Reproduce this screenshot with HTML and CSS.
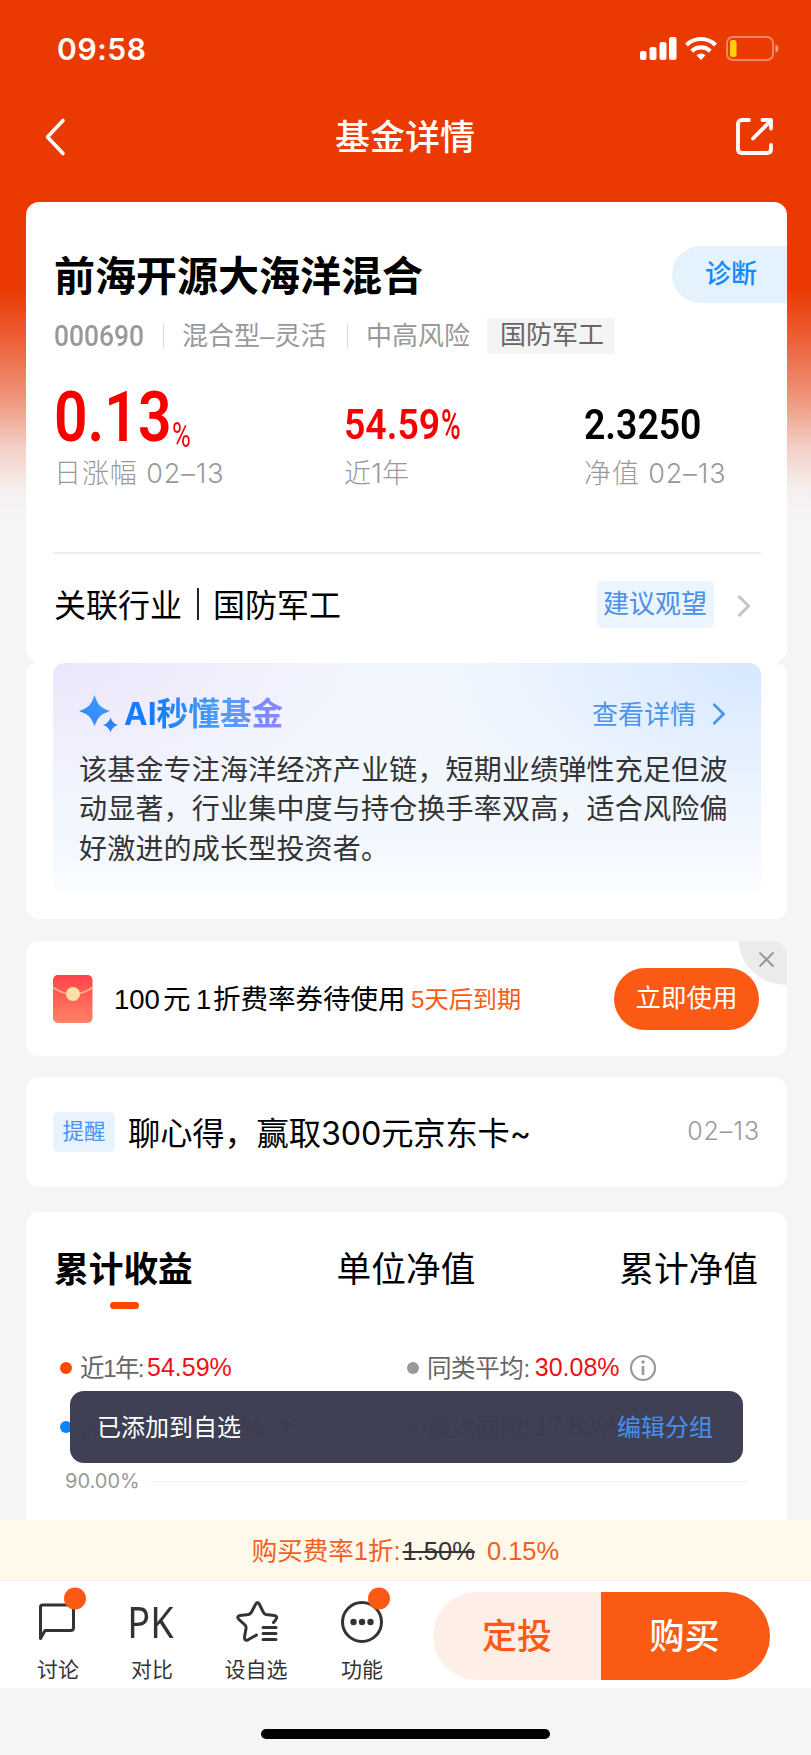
FILE: index.html
```html
<!DOCTYPE html>
<html lang="zh-CN">
<head>
<meta charset="utf-8">
<title>基金详情</title>
<link rel="stylesheet" href="styles.css">
</head>
<body>
<div class="page">
  <header class="status">
    <span class="clock">09:58</span>
    <svg class="status-icons" width="140" height="26" viewBox="0 0 140 26">
      <g fill="#fff">
        <rect x="0" y="15" width="6.500" height="9" rx="2"/>
        <rect x="9.500" y="11" width="7" height="13" rx="2"/>
        <rect x="19.500" y="6" width="7" height="18" rx="2"/>
        <rect x="29" y="1" width="7.500" height="23" rx="2"/>
        <path d="M61 24l-4.500-4.800a6.500 6.500 0 0 1 9 0z"/>
      </g>
      <g fill="none" stroke="#fff" stroke-width="4.200">
        <path d="M51.800 15.200a13.200 13.200 0 0 1 18.400 0"/>
        <path d="M46.500 9a20.500 20.500 0 0 1 29 0"/>
      </g>
      <rect x="87" y="1" width="46" height="23" rx="6" fill="none" stroke="#fff" stroke-opacity=".4" stroke-width="2"/>
      <path d="M135.500 8.500q3 1 3 4t-3 4z" fill="#fff" fill-opacity=".5"/>
      <rect x="90" y="4" width="6.500" height="17" rx="2.500" fill="#fdd10a"/>
    </svg>
  </header>
  <nav class="navbar">
    <svg width="24" height="40" viewBox="0 0 24 40" fill="none" stroke="#fff" stroke-width="3.600" stroke-linecap="round" stroke-linejoin="round"><path d="M19 3.500L3.500 20 19 36.500"/></svg>
    <h1 class="nav-title">基金详情</h1>
    <svg width="40" height="40" viewBox="0 0 40 40" fill="none" stroke="#fff" stroke-width="3.800" stroke-linecap="round" stroke-linejoin="round"><path d="M14 3H7Q3 3 3 7V32Q3 36 7 36H32Q36 36 36 32V28M18 21.500L35 4.500M27.500 3H36V11.500"/></svg>
  </nav>

  <main class="content">
    <section class="card fund">
      <div class="fund-head">
        <h2 class="fund-name">前海开源大海洋混合</h2>
        <span class="diagnose">诊断</span>
      </div>
      <div class="meta">
        <span class="code"><b class="din">000690</b></span><i class="sep"></i>
        <span class="kind">混合型–灵活</span><i class="sep"></i>
        <span class="risk">中高风险</span>
        <span class="tag">国防军工</span>
      </div>
      <div class="figures">
        <div class="figure f1">
          <div class="num up first"><span class="din big">0.13</span><span class="din pct-s">%</span></div>
          <div class="label">日涨幅 02–13</div>
        </div>
        <div class="figure f2">
          <div class="num up"><span class="din mid">54.59</span><span class="din pct-m">%</span></div>
          <div class="label tight">近1年</div>
        </div>
        <div class="figure f3">
          <div class="num"><span class="din nav">2.3250</span></div>
          <div class="label">净值 02–13</div>
        </div>
      </div>
      <div class="industry">
        <span>关联行业</span><i class="bar"></i><span>国防军工</span>
        <span class="advice">建议观望</span>
        <svg class="chev" width="16" height="24" viewBox="0 0 16 24" fill="none" stroke="#c4c4c4" stroke-width="3"><path d="M2.500 2L12.500 12 2.500 22"/></svg>
      </div>
    </section>

    <section class="card ai">
      <div class="ai-panel">
        <div class="ai-head">
          <svg width="40" height="40" viewBox="0 0 40 40">
            <defs><linearGradient id="spark" x1="1" y1="0" x2="0" y2="1"><stop offset="0" stop-color="#3ea2ff"/><stop offset="1" stop-color="#2e80fb"/></linearGradient></defs>
            <path fill="url(#spark)" d="M15.500 1Q17 5.500 18.500 8.500 20.500 12.500 25 14.500 28 16 31 17 28 18 25 19.500 20.500 21.500 18.500 25.500 17 28.500 15.500 32 14 28.500 12.500 25.500 10.500 21.500 6 19.500 3 18 0 17 3 16 6 14.500 10.500 12.500 12.500 8.500 14 5.500 15.500 1Z"/>
            <path fill="#2b84f9" d="M31.500 23.500Q33.300 29.500 39 31 33.300 32.500 31.500 38.500 29.700 32.500 24 31 29.700 29.500 31.500 23.500Z"/>
          </svg>
          <h3 class="ai-title">AI秒懂基金</h3>
          <span class="more">查看详情</span>
          <svg width="16" height="24" viewBox="0 0 16 24" fill="none" stroke="#4a94ec" stroke-width="2.600"><path d="M2.500 2L12.500 12 2.500 22"/></svg>
        </div>
        <p class="ai-text">该基金专注海洋经济产业链，短期业绩弹性充足但波<br>动显著，行业集中度与持仓换手率双高，适合风险偏<br>好激进的成长型投资者。</p>
      </div>
    </section>

    <section class="card coupon">
      <svg width="40" height="50" viewBox="0 0 40 50">
        <defs><linearGradient id="env" x1="0" y1="0" x2="0" y2="1"><stop offset="0" stop-color="#ff434c"/><stop offset="1" stop-color="#ff8265"/></linearGradient></defs>
        <rect x="0" y="1" width="39.500" height="48" rx="5" fill="url(#env)"/>
        <path d="M0 13.500Q20 27 39.500 13.500" fill="none" stroke="#ffb08e" stroke-width="2"/>
        <circle cx="20" cy="20" r="7" fill="#ffdfa8"/>
      </svg>
      <div class="coupon-text"><span class="n100">100</span><span class="yuan">元</span><span class="n1">1</span><span>折费率券待使用</span></div>
      <span class="expire">5天后到期</span>
      <span class="use">立即使用</span>
      <svg class="close" width="48" height="44" viewBox="0 0 48 44"><path d="M0 0H48V44A48 44 0 0 1 0 0Z" fill="#ebebeb"/><path d="M20.500 11.500L34.500 25.500M34.500 11.500L20.500 25.500" stroke="#999" stroke-width="2"/></svg>
    </section>

    <section class="card notice">
      <span class="remind">提醒</span>
      <span class="notice-text">聊心得，赢取300元京东卡~</span>
      <span class="date">02–13</span>
    </section>

    <section class="card chart">
      <div class="tabs">
        <span class="tab active">累计收益</span><span class="tab">单位净值</span><span class="tab">累计净值</span>
      </div>
      <div class="legend">
        <div class="item"><i class="dot orange"></i><span class="year">近1年:</span><b class="val">54.59%</b></div>
        <div class="item"><i class="dot gray"></i><span class="name">同类平均:</span><b class="val">30.08%</b>
          <svg class="info" width="28" height="28" viewBox="0 0 28 28"><circle cx="14" cy="14" r="12" fill="none" stroke="#999" stroke-width="2.200"/><path d="M14 12V21" stroke="#999" stroke-width="2.600"/><circle cx="14" cy="8" r="1.700" fill="#999"/></svg></div>
        <div class="item"><i class="dot blue"></i><span class="name">沪深300:</span><b class="val">18.79%</b><i class="caret"></i></div>
        <div class="item"><i class="dot gray"></i><span class="name">最大回撤:</span><b class="val dark">17.53%</b></div>
      </div>
      <div class="axis"><span>90.00%</span><i class="grid-line"></i></div>
      <div class="toast"><span>已添加到自选</span><span class="edit">编辑分组</span></div>
    </section>
  </main>

  <div class="rate"><div class="rate-line"><span>购买费率1折:</span><s class="old">1.50%</s><span>0.15%</span></div></div>
  <footer class="toolbar">
    <div class="tool t1">
      <svg width="50" height="62" viewBox="0 0 50 62"><path d="M9 22H37.500Q40.500 22 40.500 25V44.500Q40.500 47.500 37.500 47.500H12L7.500 55.500V24Q7.500 22 9.500 22Z" fill="none" stroke="#333" stroke-width="3" stroke-linejoin="round"/><circle cx="42" cy="15.500" r="11" fill="#fa5a14"/></svg>
      <span>讨论</span>
    </div>
    <div class="tool t2"><b class="pk">PK</b><span>对比</span></div>
    <div class="tool t3">
      <svg width="50" height="62" viewBox="0 0 50 62" fill="none" stroke="#333" stroke-width="3" stroke-linecap="round" stroke-linejoin="round"><path d="M42.500 39.500L44.500 37Q47.500 33 43 32.500L35 31.500Q33 31 32.200 29L28.500 21.500Q26.500 17.500 24.500 21.500L20.500 29Q19.500 31 17.500 31.500L9 32.500Q5 33.500 8 36.500L14 42Q15.300 43.500 15 45.500L13.500 54Q13.500 58.500 17 56.800L25.500 52"/><path d="M32 44.500H45M32 50.500H45M32 56.500H45"/></svg>
      <span>设自选</span>
    </div>
    <div class="tool t4">
      <svg width="50" height="62" viewBox="0 0 50 62"><circle cx="25" cy="39" r="19.500" fill="none" stroke="#333" stroke-width="3"/><g fill="#333"><circle cx="16.500" cy="39" r="3.200"/><circle cx="25" cy="39" r="3.200"/><circle cx="33.500" cy="39" r="3.200"/></g><circle cx="42" cy="15.500" r="11" fill="#fa5a14"/></svg>
      <span>功能</span>
    </div>
    <div class="actions"><span class="plan">定投</span><span class="buy">购买</span></div>
  </footer>
  <div class="home"><i class="home-bar"></i></div>
</div>
</body>
</html>
```

FILE: styles.css
```css
* { box-sizing: border-box; }
html, body { margin: 0; }
body { font-family: "Liberation Sans", "Noto Sans CJK SC", sans-serif; color: #000; }
h1, h2, h3, p { margin: 0; }
i { font-style: normal; display: block; flex: none; }
svg { display: block; flex: none; overflow: visible; }
span, b { white-space: nowrap; }

.page {
  width: 811px; height: 1755px; overflow: hidden;
  display: flex; flex-direction: column;
  background: linear-gradient(180deg, #ea3901 0, #ea3901 288px, #ec6138 340px, #ef9277 395px, #f3d1c8 450px, #f5f0ef 490px, #f5f5f5 520px, #f5f5f5 100%);
}
.status { height: 98px; flex: none; display: flex; justify-content: space-between; align-items: center; padding: 0 31px 0 57px; }
.clock { font: 600 30px/40px Inter, sans-serif; color: #fff; letter-spacing: .6px; }
.navbar { height: 104px; flex: none; display: flex; justify-content: space-between; align-items: center; padding: 0 36px 26px 44px; color: #fff; }
.nav-title { font-size: 35px; font-weight: 500; line-height: 50px; padding: 2px 0 0 7px; }

.content { height: 1318px; flex: none; padding: 0 24px 0 26px; overflow: hidden; }
.card { background: #fff; border-radius: 13px; position: relative; }

.fund { height: 460px; padding: 44px 0 0 28px; }
.fund-head { display: flex; justify-content: space-between; align-items: center; height: 57px; }
.fund-name { font-size: 41px; font-weight: 700; line-height: 57px; padding-top: 5px; }
.diagnose { width: 115px; height: 57px; border-radius: 29px 0 0 29px; background: #e4f2fe; color: #118bff; font-size: 26px; font-weight: 500; line-height: 56px; padding-left: 33px; }
.meta { display: flex; align-items: center; height: 36px; margin-top: 15px; color: #999; font-size: 26px; }
.din { font-family: Roboto, sans-serif; display: inline-block; transform-origin: 0 100%; }
.code { width: 109px; }
.code .din { font-size: 29px; font-weight: 500; transform: scaleX(.91); }
.sep { width: 1px; height: 26px; background: #ddd; }
.kind { width: 183px; padding: 0 0 5px 18px; }
.risk { width: 139px; padding: 0 0 5px 18px; }
.tag { width: 128px; height: 36px; padding-left: 13px; line-height: 35px; background: #f4f4f4; color: #666; }
.figures { display: grid; grid-template-columns: 290px 240px 1fr; margin-top: 30px; height: 168px; }
.num { height: 65px; line-height: 1; display: flex; align-items: flex-end; padding-bottom: 3px; }
.num.first { padding-bottom: 0; height: 68px; margin-bottom: -3px; }
.up { color: #f90000; }
.big { font-size: 70px; font-weight: 600; width: 118px; line-height: 70px; transform: scaleX(.84); }
.pct-s { font-size: 35px; line-height: 33px; transform: scaleX(.73); }
.mid { font-size: 43px; font-weight: 600; width: 97px; line-height: 43px; transform: scaleX(.87); }
.pct-m { font-size: 43px; line-height: 43px; font-weight: 500; transform: scaleX(.62); }
.nav { font-size: 43px; font-weight: 600; line-height: 43px; transform: scaleX(.87); }
.label { font-family: Inter, "Noto Sans CJK SC", sans-serif; font-size: 27px; line-height: 40px; margin-top: 5px; color: #999; letter-spacing: .9px; font-weight: 300; }
.tight { letter-spacing: .2px; }
.industry { display: flex; align-items: center; height: 108px; border-top: 2px solid #ececec; margin: 0 26px 0 -1px; padding: 0 9px 6px 1px; font-size: 32px; }
.industry > span:not(.advice) { padding-bottom: 3px; }
.bar { width: 2px; height: 32px; background: #222; margin: 0 14px 0 15px; }
.advice { margin-left: auto; width: 117px; height: 47px; border-radius: 5px; background: #ecf4fe; color: #4a90e8; font-size: 26px; line-height: 46px; padding-left: 6px; }
.chev { margin: 3px 0 0 22px; }

.ai { height: 257px; padding: 1px 26px 0 27px; }
.ai-panel {
  height: 230px; border-radius: 12px; padding: 27px 34px 0 26px;
  background:
    linear-gradient(180deg, rgba(255,255,255,0) 75%, #fafcff 100%),
    radial-gradient(ellipse 330px 150px at 0 0, #ebe5fa 0, rgba(239,235,252,.7) 50%, rgba(240,240,254,0) 100%),
    radial-gradient(ellipse 320px 170px at 100% 0, #d6e8ff 0, rgba(225,239,255,0) 100%),
    #f2f7fe;
}
.ai-head { display: flex; align-items: center; height: 48px; }
.ai-title { font-family: Inter, "Noto Sans CJK SC", sans-serif; margin-left: 5px; font-size: 31.700px; line-height: 46px; font-weight: 700; color: transparent; background: linear-gradient(90deg, #147cff 20%, #4ba0f8 60%, #8985ff 95%); -webkit-background-clip: text; background-clip: text; }
.more { margin: 0 15px 0 auto; color: #4a94ec; font-size: 26px; padding-bottom: 4px; }
.ai-text { margin-top: 13px; font-size: 28px; letter-spacing: .2px; line-height: 39.300px; color: #333; white-space: nowrap; }

.coupon { height: 115px; margin-top: 22px; padding: 0 28px 0 27px; display: flex; align-items: center; }
.coupon-text { width: 298px; margin-left: 21px; font-size: 27.500px; display: flex; align-items: baseline; padding-bottom: 4px; }
.n100 { width: 49px; } .yuan { width: 33px; } .n1 { width: 17px; }
.expire { font-size: 24.200px; color: #fa5a14; margin-left: -1px; padding-bottom: 3px; }
.use { margin-left: auto; width: 145px; height: 62px; border-radius: 31px; background: #fb5a14; color: #fff; text-align: center; font-size: 25.500px; line-height: 60px; }
.close { position: absolute; top: 0; right: 0; border-radius: 0 13px 0 0; overflow: hidden; }

.notice { height: 110px; margin-top: 21px; padding: 0 27px 0 27px; display: flex; align-items: center; }
.remind { width: 62px; height: 40px; border-radius: 5px; background: #e9f3fe; color: #4695f5; font-size: 21.500px; line-height: 40px; text-align: center; }
.notice-text { margin-left: 13px; font-size: 32.300px; font-family: Inter, "Noto Sans CJK SC", sans-serif; padding-bottom: 3px; letter-spacing: -.15px; }
.date { margin-left: auto; font: 300 25px/36px Inter, sans-serif; color: #999; letter-spacing: .9px; padding-bottom: 2px; }

.chart { height: 320px; margin-top: 25px; padding: 33px 0 0 28px; }
.tabs { display: flex; justify-content: space-between; width: 704px; font-size: 34.700px; line-height: 50px; }
.tab.active { font-weight: 700; position: relative; }
.tab.active::after { content: ""; position: absolute; left: 56px; top: 57px; width: 29px; height: 7px; border-radius: 4px; background: #ff4600; }
.legend { display: grid; grid-template-columns: 347px 1fr; grid-auto-rows: 59px; margin: 43px 0 0 6px; }
.item { display: flex; align-items: center; font-size: 24.500px; color: #666; }
.dot { width: 12px; height: 12px; border-radius: 50%; margin-right: 8px; }
.orange { background: #ff4a00; } .gray { background: #999; } .blue { background: #0a84ff; }
.year { width: 67px; letter-spacing: -1.600px; padding-bottom: 2px; }
.name { letter-spacing: -.4px; padding-bottom: 2px; margin-right: 5px; }
.val { font-weight: 400; font-size: 25px; color: #ee1016; }
.dark { color: #333; }
.info { margin-left: 9px; }
.caret { border: 6px solid transparent; border-top: 9px solid #333; border-bottom: 0; margin-left: 16px; }
.axis { display: flex; align-items: center; height: 30px; margin: 10px 0 0 11px; font-size: 20px; color: #999; font-family: Inter, sans-serif; }
.grid-line { height: 1px; width: 599px; background: #f2f2f2; margin-left: 10px; }
.toast { position: absolute; left: 44px; top: 179px; width: 673px; height: 72px; border-radius: 14px; background: rgba(59,60,81,.98); color: #fff; display: flex; align-items: center; justify-content: space-between; padding: 0 30px 4px 27px; font-size: 24px; }
.edit { color: #4590ee; }

.rate { height: 61px; flex: none; background: #fff9ec; display: flex; justify-content: center; align-items: center; color: #f0601f; border-bottom: 1px solid #eef0ea; }
.rate-line { display: flex; align-items: baseline; font-size: 25.500px; padding-bottom: 3px; }
.old { color: #333; margin: 0 12px 0 2px; }
.toolbar { height: 107px; flex: none; background: #fff; position: relative; display: flex; padding-left: 33px; }
.tool { display: flex; flex-direction: column; align-items: center; width: 50px; font-size: 21px; line-height: 30px; color: #333; padding-top: 2px; }
.t1 { margin-right: 44px; }
.t2 { margin-right: 54px; }
.t3 { margin-right: 56px; }
.tool span { margin-top: 10px; }
.pk { font: 400 43px/62px "Noto Sans", sans-serif; height: 62px; padding: 8px 3px 0 0; transform: scaleX(.88); }
.actions { position: absolute; left: 433px; top: 11px; width: 337px; height: 88px; border-radius: 44px; overflow: hidden; display: grid; grid-template-columns: 168px 169px; font-size: 35px; font-weight: 500; line-height: 90px; text-align: center; }
.plan { background: #fdeee8; color: #fa5a14; }
.buy { background: #fb5a14; color: #fff; padding-right: 2px; }
.home { flex: 1; background: #f5f5f5; display: flex; justify-content: center; padding-top: 41px; }
.home-bar { width: 289px; height: 10px; border-radius: 5px; background: #000; }
```
